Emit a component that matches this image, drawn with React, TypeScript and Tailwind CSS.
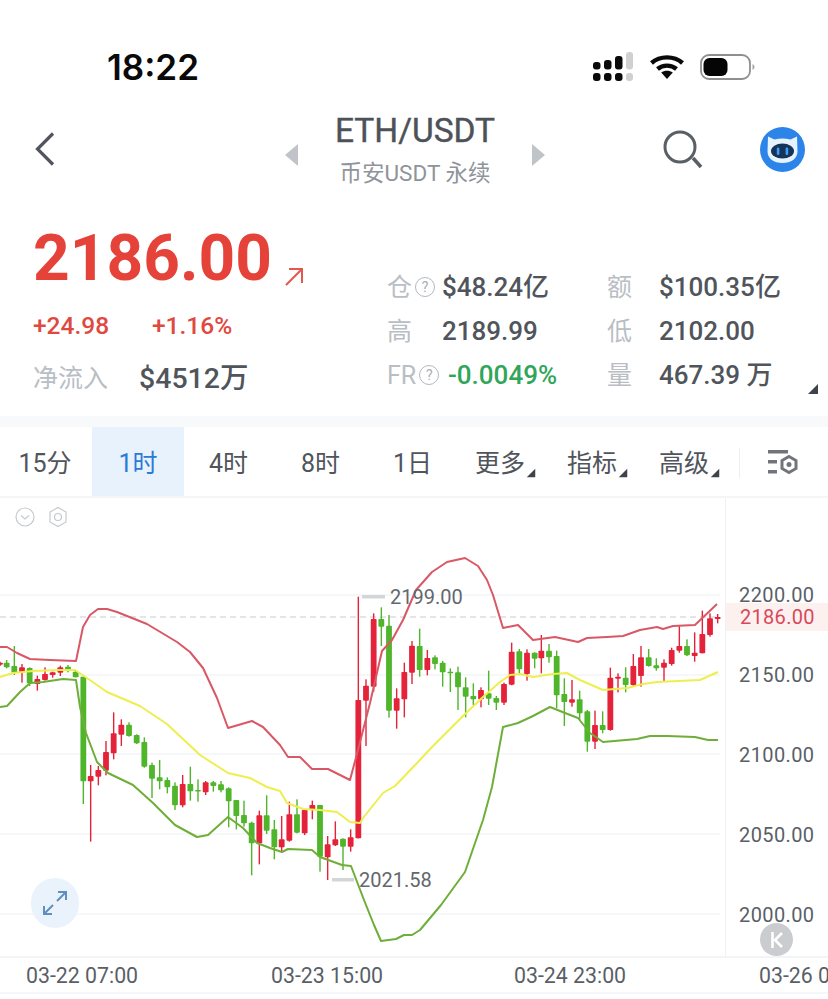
type Candle = [number, number, number, number, number, 'r' | 'g'];

// x, wick top, wick bottom, body top, body bottom (read off the 3x crops)
const part1: Candle[] = [
  [0, 245, 258, 248, 254, 'r'], [20, 240, 265, 248, 262, 'g'], [43, 198, 285, 258, 278, 'g'], [66, 252, 308, 262, 276, 'r'],
  [89, 262, 318, 264, 310, 'g'], [112, 287, 332, 297, 312, 'r'], [135, 262, 302, 282, 300, 'r'], [158, 275, 293, 277, 285, 'r'],
  [181, 257, 288, 262, 278, 'r'], [204, 255, 277, 260, 272, 'g'], [227, 270, 292, 275, 292, 'g'], [250, 290, 672, 290, 604, 'g'],
  [272, 555, 785, 588, 604, 'r'], [295, 558, 616, 570, 590, 'r'], [318, 483, 586, 516, 572, 'r'], [341, 397, 538, 460, 520, 'r'],
  [364, 418, 498, 434, 464, 'r'], [387, 427, 470, 434, 468, 'g'], [410, 463, 492, 465, 490, 'g'], [433, 472, 563, 486, 560, 'g'],
  [456, 548, 654, 555, 596, 'g'], [479, 540, 628, 592, 604, 'g'], [502, 592, 640, 600, 622, 'g'], [525, 607, 690, 617, 676, 'g'],
  [548, 585, 682, 612, 676, 'r'], [571, 560, 662, 612, 634, 'g'], [594, 598, 665, 630, 634, 'g'], [617, 603, 645, 607, 637, 'r'],
  [640, 603, 635, 607, 618, 'g'], [663, 603, 637, 613, 631, 'g'], [686, 622, 742, 625, 664, 'g'], [709, 660, 748, 660, 708, 'g'],
  [732, 662, 740, 705, 730, 'g'], [755, 725, 886, 728, 790, 'g'], [778, 692, 853, 706, 790, 'r'], [800, 646, 762, 706, 752, 'g'],
  [823, 720, 838, 748, 802, 'g'],
];
const part2: Candle[] = [
  [35, 708, 815, 778, 802, 'r'], [58, 665, 785, 703, 782, 'r'], [81, 658, 760, 703, 758, 'g'], [104, 688, 765, 690, 760, 'r'],
  [127, 662, 718, 675, 690, 'r'], [150, 675, 875, 675, 830, 'g'], [173, 768, 900, 793, 832, 'r'], [196, 724, 798, 778, 796, 'r'],
  [219, 775, 870, 776, 800, 'g'], [242, 748, 815, 772, 800, 'r'], [265, 50, 775, 360, 775, 'r'], [288, 298, 498, 317, 362, 'r'],
  [311, 100, 335, 117, 320, 'r'], [334, 82, 198, 117, 140, 'g'], [357, 105, 413, 137, 392, 'g'], [380, 325, 446, 355, 392, 'r'],
  [403, 248, 412, 276, 358, 'r'], [426, 183, 312, 197, 278, 'r'], [449, 146, 290, 198, 270, 'g'], [472, 210, 286, 234, 270, 'r'],
  [495, 226, 268, 232, 252, 'g'], [518, 243, 320, 248, 277, 'g'], [541, 265, 336, 275, 280, 'g'], [564, 260, 390, 277, 322, 'g'],
  [587, 292, 412, 322, 350, 'g'], [610, 310, 375, 348, 358, 'g'], [633, 322, 382, 330, 358, 'r'], [656, 272, 375, 340, 356, 'g'],
  [679, 348, 390, 354, 368, 'g'], [702, 308, 375, 312, 368, 'r'], [725, 188, 316, 215, 314, 'r'], [748, 207, 280, 214, 268, 'g'],
  [771, 208, 302, 218, 282, 'r'], [794, 217, 265, 218, 236, 'g'],
];
const part3: Candle[] = [
  [4, 195, 310, 242, 265, 'r'], [27, 222, 278, 242, 262, 'g'], [50, 242, 415, 258, 376, 'g'], [73, 325, 468, 372, 396, 'g'],
  [96, 330, 410, 388, 398, 'r'], [119, 362, 450, 388, 430, 'g'], [142, 420, 545, 424, 515, 'g'], [165, 422, 537, 465, 515, 'r'],
  [188, 424, 490, 465, 480, 'g'], [211, 293, 482, 323, 480, 'r'], [234, 310, 367, 320, 326, 'r'], [257, 292, 367, 323, 345, 'g'],
  [280, 252, 350, 288, 345, 'r'], [303, 228, 350, 262, 318, 'r'], [326, 237, 290, 262, 288, 'g'], [349, 265, 302, 286, 295, 'g'],
  [372, 268, 335, 278, 293, 'r'], [395, 233, 287, 240, 282, 'r'], [418, 168, 248, 228, 242, 'r'], [441, 208, 258, 228, 256, 'g'],
  [464, 187, 275, 248, 258, 'r'], [487, 122, 250, 192, 250, 'r'], [510, 130, 200, 145, 195, 'r'], [533, 132, 160, 141, 147, 'r'],
];

const place = (list: Candle[], ox: number, oy: number): Candle[] =>
  list.map(([x, a, b, c, d, k]) => [ox + x / 3, oy + a / 3, oy + b / 3, oy + c / 3, oy + d / 3, k]);

const candles = [...place(part1, 0, 580), ...place(part2, 270, 580), ...place(part3, 540, 570)];

const upper =
  '0,647 7,647 17,653 30,659 50,660 76,661 83,627 90,615 98,609 107,609 117,612 147,624 177,642 190,652 203,668 217,698 228,728 252,721 263,727 280,745 288,757 300,757 312,769 328,769 350,780 358,750 370,703 382,651 392,640 403,620 416,590 432,572 447,562 465,558 478,566 487,580 493,595 503,628 518,625 533,640 555,637 578,642 587,638 607,637 623,636 640,630 657,627 663,629 673,626 695,625 717,604';
const middle =
  '0,677 13,673 33,671 60,670 75,670 87,678 107,692 140,706 167,724 200,755 228,773 250,778 267,787 280,791 287,803 303,809 320,810 337,812 350,822 360,823 363,818 383,793 395,786 417,763 433,746 463,716 483,697 500,682 510,675 520,674 533,677 553,674 567,673 580,680 603,690 627,688 643,684 657,682 700,680 718,672';
const lower =
  '0,707 7,706 20,692 30,683 43,682 63,679 76,680 80,707 86,733 97,762 108,773 133,785 153,803 175,825 197,837 208,835 228,817 243,828 257,843 270,848 282,852 288,849 312,850 320,857 342,865 351,866 364,900 374,925 381,941 396,939 404,935 412,935 420,930 441,905 465,872 483,820 492,787 503,727 518,723 533,716 550,707 565,713 578,718 590,733 603,742 637,739 650,736 667,736 695,737 708,740 718,740';

const tabs = ['15分', '1时', '4时', '8时', '1日', '更多', '指标', '高级'];
const axis = ['2200.00', '2150.00', '2100.00', '2050.00', '2000.00'];

function Signal() {
  return (
    <svg width="41" height="30" viewBox="0 0 41 30">
      <g fill="#0a0a0a">
        <rect x="0" y="21" width="7.500" height="8" rx="3" />
        <rect x="11" y="21" width="7.500" height="8" rx="3" />
        <rect x="22" y="21" width="7.500" height="8" rx="3" />
        <rect x="0" y="10" width="7.500" height="7.500" rx="3" />
        <rect x="11" y="8" width="7.500" height="9.500" rx="3" />
        <rect x="22" y="4" width="7.500" height="13.500" rx="3" />
      </g>
      <g fill="#d0d0d0">
        <rect x="33" y="21" width="7" height="8" rx="3" />
        <rect x="33" y="0" width="7" height="17.500" rx="3" />
      </g>
    </svg>
  );
}

function Wifi() {
  return (
    <svg width="34" height="26" viewBox="0 0 34 26" fill="none" stroke="#0a0a0a" strokeWidth="4.400">
      <path d="M1.500 9C10 1.500 24 1.500 32.500 9" />
      <path d="M7.500 15C12.800 10.500 21.200 10.500 26.500 15" />
      <path d="M17 25l-5.800-6.400c3.400-2.600 8.200-2.600 11.600 0z" fill="#0a0a0a" stroke="none" />
    </svg>
  );
}

function Battery() {
  return (
    <svg width="55" height="26" viewBox="0 0 55 26">
      <rect x="1" y="1" width="49" height="24" rx="8" fill="none" stroke="#8f8f8f" strokeWidth="1.800" />
      <rect x="3.500" y="4" width="24" height="18" rx="6" fill="#050505" />
      <path d="M52.500 10c1.400 .8 2 1.800 2 3s-.6 2.200-2 3z" fill="#a5a5a5" />
    </svg>
  );
}

function Robot() {
  return (
    <svg width="45" height="45" viewBox="0 0 45 45">
      <circle cx="22.500" cy="22.500" r="22.500" fill="#2c84e8" />
      <path d="M8 9.500l6.500 3c5-1.500 11-1.500 16 0l6.500-3 .5 15c0 7-6.500 11.500-15 11.500S7.500 31.500 7.500 24.500z" fill="#e6f2fc" />
      <ellipse cx="22.500" cy="24" rx="11.500" ry="7.500" fill="#14345c" />
      <rect x="16.800" y="20.500" width="2.600" height="7.500" rx="1.300" fill="#3f9df2" />
      <rect x="25.600" y="20.500" width="2.600" height="7.500" rx="1.300" fill="#3f9df2" />
    </svg>
  );
}

function Help() {
  return (
    <span className="w-[20px] h-[20px] rounded-full border-[1.5px] border-[#b3b8be] text-[#a9aeb5] text-[14px] leading-none flex items-center justify-center shrink-0">
      ?
    </span>
  );
}

function StatLabel({ text, help }: { text: string; help?: boolean }) {
  return (
    <div className="flex items-center gap-[3px] text-[25px] leading-none text-[#b9bec4] font-normal">
      <span>{text}</span>
      {help && <Help />}
    </div>
  );
}

function Caret({ className }: { className: string }) {
  return (
    <svg width="10" height="10" viewBox="0 0 10 10" className={className}>
      <path d="M10 0v10H0z" fill="#3e434a" />
    </svg>
  );
}

function Chart() {
  return (
    <svg viewBox="0 498 725 460" className="w-[725px] h-[460px] block">
      {[595, 675, 754, 834, 914].map((y) => (
        <line key={y} x1="0" x2="720" y1={y} y2={y} stroke="#f3f4f6" strokeWidth="1.500" />
      ))}
      <line x1="0" x2="720" y1="617" y2="617" stroke="#c9cbce" strokeWidth="1" strokeDasharray="6 4" />
      {candles.map(([x, a, b, c, d, k], i) => {
        const color = k === 'r' ? '#e4233b' : '#4fb52b';
        return (
          <g key={i} fill={color}>
            <rect x={x - 0.7} y={a} width="1.400" height={b - a} />
            <rect x={x - 2.900} y={c} width="5.800" height={Math.max(d - c, 1.500)} rx="0.800" />
          </g>
        );
      })}
      <polyline points={lower} fill="none" stroke="#6fae38" strokeWidth="2" strokeLinejoin="round" />
      <polyline points={middle} fill="none" stroke="#eeee4e" strokeWidth="2" strokeLinejoin="round" />
      <polyline points={upper} fill="none" stroke="#d95865" strokeWidth="2" strokeLinejoin="round" />
      <rect x="362" y="595" width="23" height="3.500" fill="#d4d5d7" />
      <rect x="332" y="878" width="22" height="3.500" fill="#d4d5d7" />
    </svg>
  );
}

export default function App() {
  return (
    <div
      className="w-[828px] h-[999px] bg-white overflow-hidden flex flex-col"
      style={{ fontFamily: 'Roboto, "Noto Sans CJK SC", sans-serif' }}
    >
      {/* status bar */}
      <div className="h-[106px] shrink-0 flex items-start justify-between pl-[107px] pr-[73px] pt-[47px]">
        <span className="text-[35px] leading-[40px] font-semibold text-[#0a0a0a]" style={{ fontFamily: 'Inter, sans-serif' }}>
          18:22
        </span>
        <div className="flex items-start pt-[5px]">
          <Signal />
          <span className="w-[16px] mt-[2px]" />
          <span className="mt-[2px] mr-[16px]"><Wifi /></span>
          <span className="mt-[2px]"><Battery /></span>
        </div>
      </div>

      {/* title bar */}
      <div className="h-[100px] shrink-0 flex items-center relative">
        <svg width="20" height="34" viewBox="0 0 20 34" fill="none" stroke="#51565d" strokeWidth="3.200" className="ml-[35px] mt-[-14px]">
          <path d="M18 1.500L2.500 17 18 32.500" />
        </svg>
        <div className="absolute left-[285px] w-[260px] flex items-center justify-between">
          <svg width="13" height="22" viewBox="0 0 13 22" className="mt-[-3px]"><path d="M13 0v22L0 11z" fill="#c0c4c9" /></svg>
          <div className="flex flex-col items-center mt-[-14px]">
            <span className="text-[33.5px] leading-[40px] font-normal [-webkit-text-stroke:0.4px_#4d5259] text-[#4d5259]">ETH/USDT</span>
            <span className="text-[22.5px] leading-[30px] mt-[7px] text-[#8f949b] whitespace-nowrap">币安USDT 永续</span>
          </div>
          <svg width="13" height="22" viewBox="0 0 13 22" className="mt-[-3px]"><path d="M0 0v22l13-11z" fill="#c0c4c9" /></svg>
        </div>
        <svg width="40" height="40" viewBox="0 0 40 40" fill="none" stroke="#5a5f66" strokeWidth="3" className="absolute left-[663px] top-[24px]">
          <circle cx="17" cy="17" r="15" />
          <path d="M30 28l8 9" strokeWidth="3.500" />
        </svg>
        <div className="absolute left-[760px] top-[21px]">
          <Robot />
        </div>
      </div>

      {/* price block */}
      <div className="h-[210px] shrink-0 relative flex">
        <div className="w-[387px] pl-[33px] pt-[18px] shrink-0">
          <div className="flex items-end">
            <span className="text-[64px] leading-[70px] font-bold text-[#e5433a]">2186.00</span>
            <svg width="20" height="20" viewBox="0 0 20 20" fill="none" stroke="#e4574f" strokeWidth="2" className="ml-[12px] mb-[7px]">
              <path d="M2 18L18 2M5 2h13v14" />
            </svg>
          </div>
          <div className="flex text-[24.5px] leading-[28px] font-medium text-[#e0493f] mt-[18px]">
            <span className="w-[119px]">+24.98</span>
            <span>+1.16%</span>
          </div>
          <div className="flex items-center mt-[23px]">
            <span className="text-[25px] leading-[32px] w-[106px] text-[#b9bec4]">净流入</span>
            <span className="text-[28.5px] leading-[32px] font-medium text-[#50555c]">$4512万</span>
          </div>
        </div>
        <div className="grid grid-cols-[55px_165px_52px_1fr] auto-rows-[44px] items-center pt-[59px] text-[26px] font-medium text-[#50555c]">
          <StatLabel text="仓" help />
          <span>$48.24亿</span>
          <StatLabel text="额" />
          <span>$100.35亿</span>
          <StatLabel text="高" />
          <span>2189.99</span>
          <StatLabel text="低" />
          <span>2102.00</span>
          <StatLabel text="FR" help />
          <span className="text-[#2fa65a] ml-[6px]">-0.0049%</span>
          <StatLabel text="量" />
          <span>467.39 万</span>
        </div>
        <Caret className="absolute left-[808px] top-[178px]" />
      </div>

      <div className="h-[11px] shrink-0 bg-[#f8f9fa]" />

      {/* period tabs */}
      <div className="h-[71px] shrink-0 flex border-b-2 border-[#f4f5f6] pt-[2px]">
        {tabs.map((tab, i) => (
          <div
            key={tab}
            className={`w-[92px] relative flex items-center justify-center text-[25px] mt-[-2px] pt-[4px] ${
              i === 1 ? 'bg-[#e8f2fd] text-[#2b7ad6]' : 'text-[#50555c]'
            }`}
          >
            <span className={i >= 5 ? 'mr-[12px]' : i === 0 ? 'mr-[2px]' : i >= 2 ? 'mr-[3px]' : ''}>{tab}</span>
            {i >= 5 && <Caret className="absolute right-[16px] top-[41px] scale-90" />}
          </div>
        ))}
        <div className="flex-1 flex items-center justify-center pl-[2px]">
          <span className="w-px h-[30px] bg-[#eceef0] mr-[28px]" />
          <svg width="30" height="26" viewBox="0 0 30 26" className="mr-[30px]">
            <g fill="#70757c">
              <rect x="0" y="0" width="20" height="3.500" />
              <rect x="0" y="10" width="9" height="3.500" />
              <rect x="0" y="20" width="9" height="3.500" />
            </g>
            <path d="M21 6.500l7 4v8l-7 4-7-4v-8z" fill="none" stroke="#70757c" strokeWidth="3" />
            <circle cx="21" cy="14.500" r="2.500" fill="#70757c" />
          </svg>
        </div>
      </div>

      {/* chart + price axis */}
      <div className="h-[460px] shrink-0 flex relative border-b-2 border-[#f3f4f6]">
        <Chart />
        <div className="flex-1 border-l border-[#f1f2f4] pt-[85px] pl-[13px] text-[20px] leading-[24px] tracking-[0.4px] text-[#5a5f66]">
          {axis.map((v) => (
            <div key={v} className="h-[80px]">
              {v}
            </div>
          ))}
        </div>

        {/* overlays */}
        <div className="absolute left-[726px] top-[105px] w-[102px] h-[28px] bg-[#fdf1f0] pl-[14px] text-[20px] leading-[28px] tracking-[0.3px] text-[#d9485a]">
          2186.00
        </div>
        <span className="absolute left-[390px] top-[87px] text-[20px] leading-[24px] text-[#62676e]">2199.00</span>
        <span className="absolute left-[359px] top-[370px] text-[20px] leading-[24px] text-[#62676e]">2021.58</span>

        <div className="absolute left-[15px] top-[8px] flex items-center gap-[13px]">
          <svg width="20" height="20" viewBox="0 0 20 20" fill="none" stroke="#c6c9cd" strokeWidth="1.200">
            <circle cx="10" cy="10" r="9" />
            <path d="M6 8.500l4 3.500 4-3.500" />
          </svg>
          <svg width="20" height="22" viewBox="0 0 20 22" fill="none" stroke="#c6c9cd" strokeWidth="1.200">
            <path d="M10 1.500l8 4.500v10l-8 4.500L2 16V6z" />
            <circle cx="10" cy="11" r="3.500" />
          </svg>
        </div>

        <div className="absolute left-[31px] top-[380px] w-[48px] h-[50px] rounded-full bg-[#eaf3fc] flex items-center justify-center">
          <svg width="26" height="26" viewBox="0 0 26 26" fill="none" stroke="#5f8fbd" strokeWidth="2">
            <path d="M15 11l9-9M16 2h8v8M11 15l-9 9M2 16v8h8" />
          </svg>
        </div>

        <div className="absolute left-[760px] top-[425px] w-[33px] h-[33px] rounded-full bg-[#cbcccf] flex items-center justify-center">
          <svg width="16" height="18" viewBox="0 0 16 18" fill="none" stroke="#ffffff" strokeWidth="2.600">
            <path d="M3.500 1v16M13 2L6 9l7 7" />
          </svg>
        </div>
      </div>

      {/* time axis */}
      <div className="h-[36px] shrink-0 relative border-b-2 border-[#f5f6f7] text-[21.3px] leading-[36px] text-[#5a5f66] whitespace-nowrap flex">
        <span className="ml-[26px] w-[245px] shrink-0">03-22 07:00</span>
        <span className="w-[243px] shrink-0">03-23 15:00</span>
        <span className="w-[245px] shrink-0">03-24 23:00</span>
        <span className="shrink-0">03-26 07:00</span>
      </div>
    </div>
  );
}
